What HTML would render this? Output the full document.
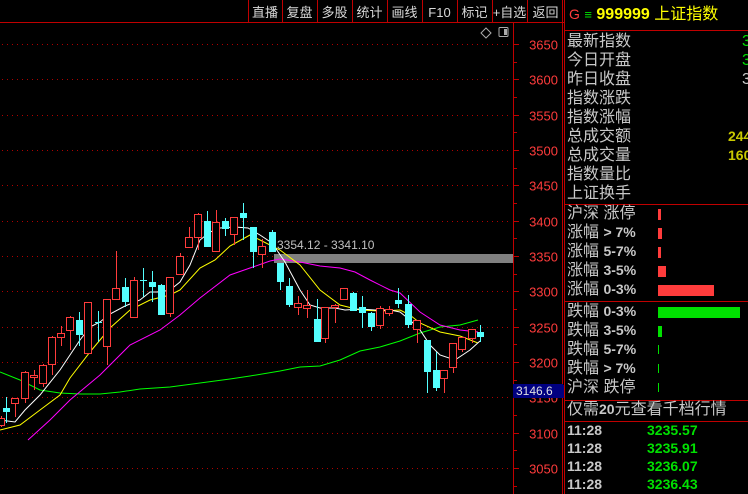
<!DOCTYPE html>
<html><head><meta charset="utf-8">
<style>
body{margin:0;width:748px;height:494px;background:#000;overflow:hidden;font-family:"Liberation Sans","Noto Sans CJK SC",sans-serif;}
svg{position:absolute;left:0;top:0}
.p{position:absolute;left:567px;color:#c8c8c8;font-size:16px;line-height:19px;white-space:nowrap;font-family:"Liberation Sans","WenQuanYi Zen Hei","Noto Sans CJK SC",sans-serif}
</style></head><body>
<svg id="s" width="748" height="494" xmlns="http://www.w3.org/2000/svg"></svg>
<div id="t"></div>
<script>
const s=document.getElementById('s');let h='';
const Y=p=>44+(3650-p)*0.7067;
// toolbar
const sep=[248,282,317,352,387,422,457,492,527];
const lab=['直播','复盘','多股','统计','画线','F10','标记','+自选','返回'];
for(let i=0;i<9;i++){h+=`<line x1="${sep[i]+0.5}" y1="0" x2="${sep[i]+0.5}" y2="22" stroke="#c00000"/>`;
 const cx=(sep[i]+(sep[i+1]||564))/2;h+=`<text x="${cx}" y="17" fill="#d8d8d8" font-size="13" text-anchor="middle" font-family="Liberation Sans,WenQuanYi Zen Hei,sans-serif">${lab[i]}</text>`;}
h+=`<line x1="0" y1="22.5" x2="564" y2="22.5" stroke="#c00000"/>`;
h+=`<line x1="513.5" y1="22" x2="513.5" y2="494" stroke="#c00000"/>`;
h+=`<line x1="562.5" y1="0" x2="562.5" y2="494" stroke="#c00000"/><line x1="564.5" y1="0" x2="564.5" y2="494" stroke="#c00000"/>`;
// icons
h+=`<path d="M486 28 L491 33 L486 38 L481 33 Z" fill="none" stroke="#aaa"/><rect x="499" y="27.5" width="9" height="9" rx="1" fill="none" stroke="#aaa"/><rect x="504" y="29" width="3" height="6" fill="#aaa"/>`;
// grid
for(let p=3650;p>=3050;p-=50){const y=Math.round(Y(p))+0.5;h+=`<line x1="2" y1="${y}" x2="510" y2="${y}" stroke="#b00000" stroke-dasharray="1 4"/><line x1="513" y1="${y}" x2="519" y2="${y}" stroke="#c00000"/><text x="558" y="${y+5}" fill="#ff3c3c" font-size="13" text-anchor="end">${p}</text>`;
 const y2=Math.round(Y(p-25))+0.5;h+=`<line x1="513" y1="${y2}" x2="517" y2="${y2}" stroke="#c00000"/>`;}
// grey bar
h+=`<rect x="274" y="254" width="239" height="9" fill="#808080"/><text x="277" y="249" fill="#c0c0c0" font-size="12">3354.12 - 3341.10</text>`;
// MAs
const pl=(pts,c)=>`<polyline points="${pts}" fill="none" stroke="${c}" stroke-width="1"/>`;
h+=pl("0,372 20,380 40,390 60,393 80,394 100,394 120,392 140,389 170,387 200,383 230,379 250,376 280,371 300,367 320,366 340,360 360,351 380,347 400,341 420,333 440,327 460,325 478,320","#00ff00");
h+=pl("28,440 50,420 70,400 100,375 130,345 160,330 180,315 200,298 230,275 250,268 270,261 280,259 300,262 320,266 340,268 355,272 370,280 390,290 400,293 420,312 440,325 460,330 478,332","#ff00ff");
h+=pl("0,430 20,425 40,410 60,395 70,378 90,352 110,328 130,310 150,300 170,295 180,290 200,268 215,260 230,246 250,235 260,240 280,250 300,265 320,290 340,305 360,310 380,311 400,310 410,315 420,323 440,332 460,336 478,343","#ffff00");
h+=pl("0,420 15,422 25,410 40,395 60,370 80,340 90,327 100,322 110,314 125,306 140,300 150,292 160,292 170,290 180,282 190,265 200,240 210,232 220,228 235,227 248,228 260,235 272,243 285,262 300,290 310,305 320,308 335,308 345,310 360,309 375,310 390,310 400,312 410,320 420,330 430,345 440,355 455,360 470,350 480,341","#ffffff");
// candles: x, color(r/c), bodyTop, bodyBot, wickTop, wickBot
const C=[[1,'r',418,425,416,427],[6,'c',408,412,397,423],[15,'r',398,403,398,417],[25,'r',372,398,371,403],[34,'r',375,377,370,390],[43,'r',365,383,364,387],[52,'r',337,364,336,375],[61,'r',333,337,326,346],[70,'r',317,330,316,350],[79,'c',320,335,312,346],[88,'r',302,353,302,353],[98,'c',322,323,311,342],[107,'r',299,346,299,365],[116,'r',288,299,251,299],[125,'c',287,302,278,307],[134,'r',280,317,277,317],[143,'c',280,281,268,297],[152,'c',282,287,271,302],[161,'c',285,315,284,315],[170,'r',277,313,277,317],[180,'r',256,274,253,274],[189,'r',237,247,227,247],[198,'r',214,237,213,250],[207,'c',221,247,211,247],[216,'r',222,251,210,251],[225,'c',221,229,218,236],[234,'r',217,234,217,245],[243,'c',213,218,203,240],[253,'c',227,252,227,268],[262,'r',246,254,239,268],[272,'c',232,252,230,252],[280,'c',263,282,263,290],[289,'c',286,305,278,307],[298,'r',303,307,296,315],[307,'r',305,308,290,318],[317,'c',319,342,299,342],[325,'r',307,338,307,343],[335,'r',305,307,304,323],[344,'r',288,299,288,299],[353,'c',293,311,292,311],[362,'c',307,313,296,328],[371,'c',313,327,312,331],[380,'r',308,325,306,329],[389,'r',309,313,306,316],[398,'c',300,304,288,308],[408,'c',304,325,295,328],[417,'r',320,329,320,343],[427,'c',340,372,340,393],[436,'c',370,388,352,391],[444,'r',370,378,370,393],[453,'r',343,367,343,373],[462,'r',337,349,337,352],[472,'r',329,338,329,343],[480,'c',332,337,325,342]];
for(const [x,c,bt,bb,wt,wb] of C){const col=c=='r'?'#ff3c3c':'#54ffff';
 h+=`<line x1="${x+0.5}" y1="${wt}" x2="${x+0.5}" y2="${bt}" stroke="${col}"/><line x1="${x+0.5}" y1="${bb}" x2="${x+0.5}" y2="${wb}" stroke="${col}"/>`;
 if(c=='r')h+=`<rect x="${x-3.5}" y="${bt+0.5}" width="7" height="${Math.max(bb-bt,1)}" fill="#000" stroke="${col}"/>`;
 else h+=`<rect x="${x-3}" y="${bt}" width="7" height="${Math.max(bb-bt,1)}" fill="${col}"/>`;}
// price label
h+=`<rect x="513" y="384" width="50" height="14" fill="#000080"/><text x="516" y="395" fill="#e0e0e0" font-size="12">3146.6</text><rect x="560" y="385" width="4" height="13" fill="#000080"/>`;
// panel lines
for(const y of [30,204,301,400,421])h+=`<line x1="565" y1="${y+0.5}" x2="748" y2="${y+0.5}" stroke="#c00000"/>`;
// bars
const br=[[214,3],[233,4],[252,3],[271,8],[290,56]];for(const[y,w]of br)h+=`<rect x="658" y="${y-5}" width="${w}" height="11" fill="#ff3c3c"/>`;
const bg=[[312,82],[331,4],[350,1],[369,1],[388,1]];for(const[y,w]of bg)h+=`<rect x="658" y="${y-5}" width="${w}" height="${w>2?11:9}" fill="#00e000"/>`;
s.innerHTML=h;
let t='';
const row=(y,txt,st='')=>t+=`<div class="p" style="top:${y-10}px;${st}">${txt}</div>`;
row(15,'<span style="color:#ff3c3c;font-size:14px">G</span> <span style="color:#00e000;font-size:13px">≡</span> <span style="color:#ffff00;font-weight:bold">999999</span> <span style="color:#ffff00">上证指数</span>','left:569px');
['最新指数','今日开盘','昨日收盘','指数涨跌','指数涨幅','总成交额','总成交量','指数量比','上证换手'].forEach((a,i)=>row(42+i*19,a));
row(42,'<span style="color:#00e000">3</span>','left:742px');row(61,'<span style="color:#00e000">3</span>','left:742px');row(80,'3','left:742px');
row(137,'<b style="color:#c8c800;font-size:14px">244</b>','left:728px');row(156,'<b style="color:#c8c800;font-size:14px">160</b>','left:728px');
['沪深 涨停','涨幅 <b style="font-size:14px">&gt; 7%</b>','涨幅 <b style="font-size:14px">5-7%</b>','涨幅 <b style="font-size:14px">3-5%</b>','涨幅 <b style="font-size:14px">0-3%</b>'].forEach((a,i)=>row(214+i*19,a));
['跌幅 <b style="font-size:14px">0-3%</b>','跌幅 <b style="font-size:14px">3-5%</b>','跌幅 <b style="font-size:14px">5-7%</b>','跌幅 <b style="font-size:14px">&gt; 7%</b>','沪深 跌停'].forEach((a,i)=>row(312+i*19,a));
row(410,'仅需<b style="font-size:14px">20</b>元查看千档行情');
['3235.57','3235.91','3236.07','3236.43'].forEach((v,i)=>{row(431+i*18,'<b style="font-size:14px">11:28</b>');row(431+i*18,'<b style="font-size:14px;color:#00e000">'+v+'</b>','left:647px');});
document.getElementById('t').innerHTML=t;
</script>
</body></html>
